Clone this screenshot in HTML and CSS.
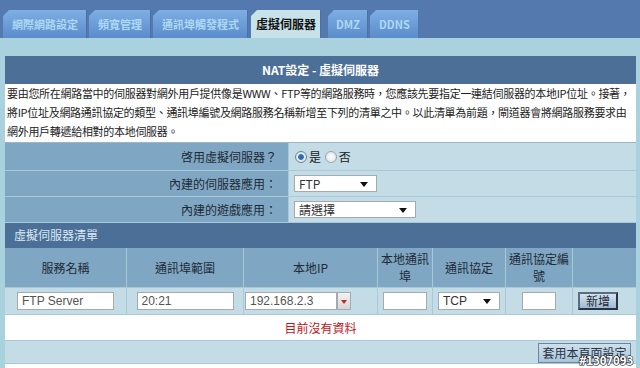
FILE: index.html
```html
<!DOCTYPE html>
<html lang="zh-Hant">
<head>
    <meta charset="UTF-8">
    <title>虛擬伺服器</title>
    <link rel="stylesheet" href="styles.css">
</head>
<body>
    <div class="top-bar">
        <div class="tab">網際網路設定</div>
        <div class="tab">頻寬管理</div>
        <div class="tab">通訊埠觸發程式</div>
        <div class="tab active">虛擬伺服器</div>
        <div class="tab dmz">DMZ</div>
        <div class="tab">DDNS</div>
    </div>
    <div class="band"></div>

    <div class="panel">
        <div class="panel-title">NAT設定 - 虛擬伺服器</div>
        <div class="desc">要由您所在網路當中的伺服器對網外用戶提供像是WWW、FTP等的網路服務時，您應該先要指定一連結伺服器的本地IP位址。接著，<br>將IP位址及網路通訊協定的類型、通訊埠編號及網路服務名稱新增至下列的清單之中。以此清單為前題，閘道器會將網路服務要求由<br>網外用戶轉遞給相對的本地伺服器。</div>

        <table class="form">
            <tr class="r1">
                <th>啓用虛擬伺服器？</th>
                <td>
                    <span class="radio on"></span>是
                    <span class="radio"></span>否
                </td>
            </tr>
            <tr>
                <th>內建的伺服器應用：</th>
                <td><div class="select s-ftp">FTP<span class="arrow"></span></div></td>
            </tr>
            <tr>
                <th>內建的遊戲應用：</th>
                <td><div class="select s-game">請選擇<span class="arrow"></span></div></td>
            </tr>
        </table>

        <div class="list-title">虛擬伺服器清單</div>
        <table class="list">
            <tr class="head">
                <th class="c1">服務名稱</th>
                <th class="c2">通訊埠範圍</th>
                <th class="c3">本地IP</th>
                <th class="c4">本地通訊<br>埠</th>
                <th class="c5">通訊協定</th>
                <th class="c6">通訊協定編<br>號</th>
                <th class="c7"></th>
            </tr>
            <tr class="data">
                <td><div class="field w-name">FTP Server</div></td>
                <td><div class="field w-port">20:21</div></td>
                <td>
                    <div class="ip-box">
                        <div class="field w-ip">192.168.2.3</div>
                        <span class="ip-drop"></span>
                    </div>
                </td>
                <td><div class="field w-local"></div></td>
                <td><div class="select s-proto">TCP<span class="arrow"></span></div></td>
                <td><div class="field w-num"></div></td>
                <td class="add-cell"><button class="btn-add">新增</button></td>
            </tr>
            <tr class="empty">
                <td colspan="7">目前沒有資料</td>
            </tr>
            <tr class="foot">
                <td colspan="7"><button class="btn-apply">套用本頁面設定</button></td>
            </tr>
        </table>
    </div>

    <div class="mark">#1307093</div>
</body>
</html>
```

FILE: styles.css
```css
body {
    margin: 0;
    background-color: #a9d2de;
    font-family: "Noto Sans CJK TC", "Liberation Sans", sans-serif;
    font-size: 11px;
    color: #222;
    position: relative;
    height: 368px;
    overflow: hidden;
}
.top-bar {
    height: 38px;
    background-color: #5479af;
    display: flex;
    align-items: flex-end;
    gap: 2px;
    padding-left: 3px;
    box-sizing: border-box;
}
.tab {
    height: 28px;
    line-height: 28px;
    padding: 0 9px;
    font-size: 11px;
    font-weight: bold;
    color: #acd8f4;
    background: linear-gradient(#7eaee2, #5b8ccb);
    clip-path: polygon(6px 0, 100% 0, 100% 100%, 0 100%, 0 6px);
    box-shadow: inset -1px 0 0 #4a72a8;
}
.tab.active {
    background: #c8e2ea;
    color: #111;
    font-size: 12px;
    margin-left: 1px;
    padding: 0 5px;
}
.tab.dmz {
    margin-left: 5px;
    padding: 0 8px;
}
.band {
    height: 18px;
}
.panel {
    margin: 0 4px 0 5px;
    background-color: #fff;
    height: 312px;
}
.panel-title {
    height: 28px;
    line-height: 28px;
    background-color: #4c6f98;
    color: #fff;
    font-weight: bold;
    font-size: 12px;
    text-align: center;
}
.desc {
    padding: 0 2px;
    height: 58px;
    line-height: 19px;
    letter-spacing: -0.3px;
    border-bottom: 1px solid #9ab6c8;
    overflow: hidden;
}
table {
    border-collapse: collapse;
    width: 100%;
}
.form th {
    width: 272px;
    padding: 0 11px 0 0;
    text-align: right;
    font-weight: normal;
    font-size: 12px;
    background-color: #7fa6c3;
    color: #1e2a36;
    border-bottom: 1px solid #a9c8d8;
}
.form td {
    background-color: #c3dce6;
    border-bottom: 1px solid #a9c8d8;
    border-left: 1px solid #a9c8d8;
    padding: 0 5px;
    font-size: 12px;
}
.form tr {
    height: 26px;
}
.form tr.r1 {
    height: 27px;
}
.radio {
    display: inline-block;
    width: 10px;
    height: 10px;
    border-radius: 50%;
    border: 1px solid #9aa4ac;
    background: radial-gradient(#fff, #d8dde0);
    vertical-align: -1px;
    margin: 0 2px 0 1px;
}
.radio.on {
    background: radial-gradient(#2d6fae 35%, #dfe8f0 45%);
    border-color: #6d8296;
}
.select {
    position: relative;
    background-color: #fff;
    border: 1px solid #a3aab2;
    height: 17px;
    line-height: 16px;
    padding-left: 4px;
    font-size: 12px;
    color: #333;
    box-sizing: border-box;
}
.select .arrow {
    position: absolute;
    right: 8px;
    top: 6px;
    border-left: 4px solid transparent;
    border-right: 4px solid transparent;
    border-top: 5px solid #111;
}
.s-ftp {
    width: 83px;
}
.s-game {
    width: 122px;
}
.list-title {
    height: 25px;
    line-height: 24px;
    background-color: #4c6f98;
    color: #d8e8f2;
    font-size: 12px;
    padding-left: 9px;
}
.list th {
    background-color: #7fa6c3;
    color: #1e2a36;
    font-weight: normal;
    font-size: 12px;
    line-height: 17px;
    height: 39px;
    border-left: 1px solid #a9c8d8;
    padding: 0;
}
.list th.c1 {
    border-left: none;
    width: 121px;
}
.c2 { width: 116px; }
.c3 { width: 133px; }
.c4 { width: 54px; }
.c5 { width: 72px; }
.c6 { width: 66px; }
.list .data td {
    background-color: #c3dce6;
    height: 26px;
    border-left: 1px solid #a9c8d8;
    border-top: 1px solid #a9c8d8;
    text-align: center;
    padding: 0;
}
.list .data td:first-child {
    border-left: none;
}
.list .data td.add-cell {
    text-align: left;
    padding-left: 5px;
}
.field {
    display: inline-block;
    vertical-align: middle;
    background-color: #fff;
    border: 1px solid #a3aab2;
    height: 18px;
    line-height: 16px;
    box-sizing: border-box;
    text-align: left;
    padding-left: 4px;
    font-family: "Liberation Sans", sans-serif;
    font-size: 12px;
    color: #555;
}
.w-name { width: 97px; }
.w-port { width: 97px; }
.w-ip { width: 92px; }
.w-local { width: 44px; }
.w-num { width: 34px; }
.ip-box {
    display: flex;
    align-items: center;
    padding-left: 1px;
}
.ip-drop {
    position: relative;
    width: 14px;
    height: 18px;
    box-sizing: border-box;
    border: 1px solid #a3aab2;
    background: linear-gradient(#f2f2f2, #d6d6d6);
}
.ip-drop::after {
    content: "";
    position: absolute;
    left: 3px;
    top: 7px;
    border-left: 3px solid transparent;
    border-right: 3px solid transparent;
    border-top: 4px solid #c0282a;
}
.s-proto {
    display: inline-block;
    width: 62px;
    height: 18px;
    text-align: left;
    font-family: "Liberation Sans", sans-serif;
    vertical-align: middle;
}
.btn-add {
    width: 40px;
    height: 18px;
    padding: 0;
    font-family: inherit;
    font-size: 12px;
    line-height: 14px;
    color: #1e2a36;
    background: linear-gradient(#d4e3ee, #9fbad2);
    border: 2px solid #2f4058;
    border-color: #5a6c82 #263446 #263446 #5a6c82;
}
.list .empty td {
    height: 25px;
    padding: 0;
    background-color: #fff;
    color: #c0141c;
    text-align: center;
    border-top: 1px solid #a9c8d8;
    font-size: 12px;
}
.list .foot td {
    height: 23px;
    background-color: #c3dce6;
    text-align: right;
    border-top: 1px solid #a9c8d8;
    border-bottom: 1px solid #a9c8d8;
    padding: 2px 5px 0 0;
    vertical-align: top;
    box-sizing: border-box;
}
.btn-apply {
    width: 93px;
    height: 20px;
    padding: 0;
    font-family: inherit;
    font-size: 12px;
    line-height: 16px;
    color: #2a3442;
    background: linear-gradient(#cfe0ec, #a9c4da);
    border: 1px solid #6a86a2;
}
.mark {
    position: absolute;
    right: 7px;
    bottom: 0;
    font-family: "DejaVu Sans Mono", monospace;
    font-weight: bold;
    font-size: 12px;
    line-height: 14px;
    color: #fff;
    -webkit-text-stroke: 1px #000;
    paint-order: stroke fill;
    letter-spacing: -0.5px;
}
```
